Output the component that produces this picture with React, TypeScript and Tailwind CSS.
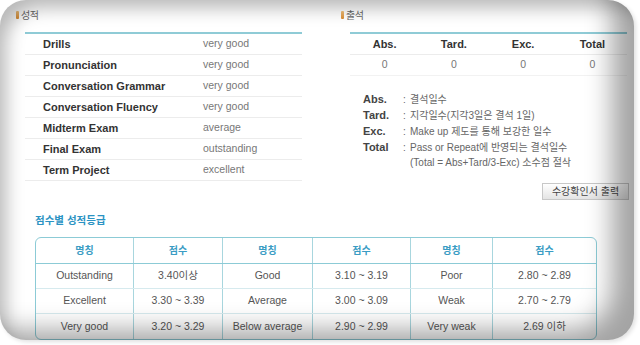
import React from "react";

const scores = [
  ["Drills", "very good"],
  ["Pronunciation", "very good"],
  ["Conversation Grammar", "very good"],
  ["Conversation Fluency", "very good"],
  ["Midterm Exam", "average"],
  ["Final Exam", "outstanding"],
  ["Term Project", "excellent"],
];

const legend = [
  ["Abs.", "결석일수"],
  ["Tard.", "지각일수(지각3일은 결석 1일)"],
  ["Exc.", "Make up 제도를 통해 보강한 일수"],
  ["Total", "Pass or Repeat에 반영되는 결석일수"],
];

const grades = [
  ["Outstanding", "3.40이상", "Good", "3.10 ~ 3.19", "Poor", "2.80 ~ 2.89"],
  ["Excellent", "3.30 ~ 3.39", "Average", "3.00 ~ 3.09", "Weak", "2.70 ~ 2.79"],
  ["Very good", "3.20 ~ 3.29", "Below average", "2.90 ~ 2.99", "Very weak", "2.69 이하"],
];

function SectionTitle({ title }: { title: string }) {
  return (
    <div className="flex items-center h-[14px] gap-[2px]">
      <span className="w-[3px] h-[8px] rounded-[1px] bg-gradient-to-b from-[#f3c27a] to-[#d98a2c]" />
      <span className="text-[10px] tracking-[-0.5px] text-[#666]">{title}</span>
    </div>
  );
}

export default function App() {
  return (
    <div
      className="w-[640px] h-[345px] bg-white overflow-hidden"
      style={{ fontFamily: '"Liberation Sans", "Noto Sans CJK KR", sans-serif' }}
    >
      <div className="relative w-[634px] h-[340px] rounded-[26px] bg-white">
        <div className="flex pt-[8px] pl-[16px]">
          {/* 성적 */}
          <div className="w-[286px]">
            <SectionTitle title="성적" />
            <div className="mt-[10px] ml-[9px] w-[277px] border-t-2 border-[#8fcbd6]">
              {scores.map(([label, value]) => (
                <div key={label} className="flex items-center h-[21px] border-b border-[#ececec]">
                  <span className="w-[178px] pl-[18px] text-[11px] font-bold text-[#333]">{label}</span>
                  <span className="text-[10.5px] text-[#777]">{value}</span>
                </div>
              ))}
            </div>
          </div>

          {/* 출석 */}
          <div className="ml-[39px] w-[288px]">
            <SectionTitle title="출석" />
            <div className="mt-[10px] ml-[9px] w-[277px] border-t-2 border-[#8fcbd6]">
              <div className="grid grid-cols-4 h-[21px] items-center border-b border-[#ececec] text-[11px] font-bold text-[#333] text-center">
                <span>Abs.</span>
                <span>Tard.</span>
                <span>Exc.</span>
                <span>Total</span>
              </div>
              <div className="grid grid-cols-4 h-[21px] items-center border-b border-[#f2f2f2] text-[10.5px] text-[#777] text-center">
                <span>0</span>
                <span>0</span>
                <span>0</span>
                <span>0</span>
              </div>
            </div>
            <div className="mt-[15px] ml-[22px] text-[10px] text-[#666]">
              {legend.map(([k, v]) => (
                <div key={k} className="flex h-[16px] items-center">
                  <span className="w-[40px] text-[11px] font-bold text-[#444]">{k}</span>
                  <span className="w-[7px]">:</span>
                  <span>{v}</span>
                </div>
              ))}
              <div className="flex h-[14px] items-center pl-[47px]">(Total = Abs+Tard/3-Exc) 소수점 절삭</div>
            </div>
            <div className="flex justify-end mt-[14px]">
              <button className="h-[17px] w-[87px] border border-[#c8c8c8] bg-gradient-to-b from-white to-[#e4e4e4] text-[10px] text-[#444] leading-none">
                수강확인서 출력
              </button>
            </div>
          </div>
        </div>

        {/* 점수별 성적등급 */}
        <div className="pl-[35px] mt-[14px]">
          <h2 className="h-[14px] flex items-center text-[10.5px] font-bold text-[#2b93c3]">점수별 성적등급</h2>
          <div className="mt-[9px] w-[562px] rounded-[6px] border border-[#8ccbd6] overflow-hidden">
            <div className="grid grid-cols-[98px_89px_90px_98px_82px_103px] h-[26px] border-b border-[#8ccbd6]">
              {["명칭", "점수", "명칭", "점수", "명칭", "점수"].map((h, i) => (
                <div
                  key={i}
                  className={`flex items-center justify-center text-[10px] font-bold text-[#3a9cc4] ${i < 5 ? "border-r border-[#a8d6de]" : ""}`}
                >
                  {h}
                </div>
              ))}
            </div>
            {grades.map((row, r) => (
              <div
                key={r}
                className={`grid grid-cols-[98px_89px_90px_98px_82px_103px] h-[25px] ${r < 2 ? "border-b border-[#d6eaee]" : ""}`}
              >
                {row.map((c, i) => (
                  <div
                    key={i}
                    className={`flex items-center justify-center text-[10.5px] text-[#555] ${i < 5 ? "border-r border-[#a8d6de]" : ""}`}
                  >
                    {c}
                  </div>
                ))}
              </div>
            ))}
          </div>
        </div>

        {/* frame shading */}
        <div className="absolute inset-0 rounded-[26px] pointer-events-none shadow-[inset_14px_16px_18px_-8px_rgba(0,0,0,0.28),inset_-38px_-26px_26px_-16px_rgba(0,0,0,0.36),2px_2px_4px_rgba(0,0,0,0.12)]" />
      </div>
    </div>
  );
}
